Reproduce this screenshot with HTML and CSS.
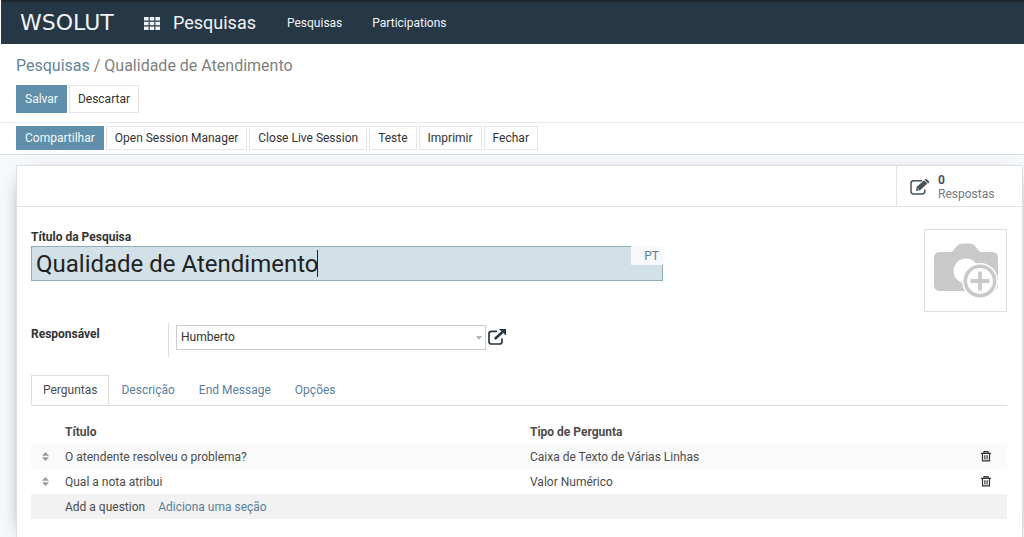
FILE: index.html
```html
<!DOCTYPE html>
<html lang="pt">
<head>
<meta charset="utf-8">
<title>Pesquisas - Qualidade de Atendimento</title>
<link rel="stylesheet" href="styles.css">
</head>
<body>
<header class="navbar">
  <span class="brand">WSOLUT</span>
  <button class="apps" aria-label="Apps"><svg width="16" height="13" viewBox="0 0 16 13" fill="currentColor"><path d="M0 0h4.6v3.6H0zM5.7 0h4.6v3.6H5.7zM11.4 0H16v3.6h-4.6zM0 4.7h4.6v3.6H0zM5.7 4.7h4.6v3.6H5.7zM11.4 4.7H16v3.6h-4.6zM0 9.4h4.6V13H0zM5.7 9.4h4.6V13H5.7zM11.4 9.4H16V13h-4.6z"/></svg></button>
  <a class="app-name" href="#">Pesquisas</a>
  <nav class="menu"><a href="#">Pesquisas</a><a href="#">Participations</a></nav>
</header>
<section class="control">
  <div class="crumbs"><a href="#">Pesquisas</a> / <span>Qualidade de Atendimento</span></div>
  <div class="buttons"><button class="btn primary">Salvar</button><button class="btn">Descartar</button></div>
</section>
<section class="statusbar">
  <button class="btn primary">Compartilhar</button><button class="btn">Open Session Manager</button><button class="btn">Close Live Session</button><button class="btn">Teste</button><button class="btn">Imprimir</button><button class="btn">Fechar</button>
</section>
<main class="content">
  <div class="sheet">
    <div class="button-box">
      <button class="stat">
        <svg width="20" height="16" viewBox="0 0 20 16" fill="none" stroke="currentColor"><path d="M12 1.7H3.6Q1 1.7 1 4.2v8.4Q1 15 3.6 15h8.600q2.600 0 2.600-2.400v-2.200" stroke-width="1.500"/><path d="M6 12l.6-4L14 1.300l3.400 3.200L10 11.300z" fill="currentColor" stroke="none"/><path d="M14.700.7l1-.6q.6-.3 1.100.1l2.300 2.200q.5.600 0 1.100l-.9.9z" fill="currentColor" stroke="none"/><path d="M7.500 9.600l1.200 1.200" stroke="#fff" stroke-width=".7"/></svg>
        <span><strong>0</strong>Respostas</span>
      </button>
    </div>
    <div class="body">
      <div class="head">
        <div class="title">
          <label for="title">Título da Pesquisa</label>
          <div class="title-field">
            <input id="title" type="text" value="Qualidade de Atendimento">
            <span class="caret"></span>
            <button class="lang">PT</button>
          </div>
        </div>
        <button class="photo" aria-label="Imagem"><svg width="64" height="56" viewBox="0 0 64 56"><path d="M6 9h12l5-6q2-2.500 5-2.500h8q3 0 5 2.500l5 6h12q6 0 6 6v27q0 6-6 6H6q-6 0-6-6V15q0-6 6-6z" fill="#c9c9c9"/><circle cx="32" cy="28" r="12.500" fill="#fff"/><circle cx="46" cy="38" r="18" fill="#fff"/><circle cx="46" cy="38" r="14.700" fill="#fff" stroke="#c9c9c9" stroke-width="3.600"/><path d="M46 28.500v19M36.500 38h19" stroke="#c9c9c9" stroke-width="3.800"/></svg></button>
      </div>
      <div class="group">
        <label for="owner">Responsável</label>
        <div class="owner-field">
          <select id="owner"><option>Humberto</option></select>
          <svg class="arrow" width="6" height="4" viewBox="0 0 6 4"><path d="M0 0h6L3 4z" fill="#b5b5b5"/></svg>
          <button class="open" aria-label="Abrir"><svg width="18" height="16" viewBox="0 0 18 16" fill="none" stroke="currentColor"><path d="M9 2.300H3.500Q1 2.300 1 4.700v7.800Q1 15 3.500 15h8q2.500 0 2.500-2.500V9.500" stroke-width="1.700"/><path d="M6.800 10L14.500 3" stroke-width="2.400"/><path d="M11 0h7v6.500z" fill="currentColor" stroke="none"/></svg></button>
        </div>
      </div>
      <div class="tabs" role="tablist"><button class="tab active" role="tab">Perguntas</button><button class="tab" role="tab">Descrição</button><button class="tab" role="tab">End Message</button><button class="tab" role="tab">Opções</button></div>
      <table class="list">
        <thead><tr><th class="grip"></th><th>Título</th><th class="type">Tipo de Pergunta</th><th class="remove"></th></tr></thead>
        <tbody>
          <tr><td class="grip"><svg width="7" height="9" viewBox="0 0 7 9"><path d="M0 3.700h7L3.500 0zM0 5.300h7L3.500 9z"/></svg></td><td>O atendente resolveu o problema?</td><td>Caixa de Texto de Várias Linhas</td><td class="remove"><button aria-label="Excluir"><svg width="10" height="11" viewBox="0 0 10 11" fill="none" stroke="currentColor"><path d="M0 2.400h10M3 2V.7h4V2" stroke-width="1.200"/><path d="M1.500 2.500v7.300h7V2.500" stroke-width="1.200"/><path d="M3.600 4.200v4.300M5 4.200v4.300M6.400 4.200v4.300" stroke-width=".8"/></svg></button></td></tr>
          <tr><td class="grip"><svg width="7" height="9" viewBox="0 0 7 9"><path d="M0 3.700h7L3.500 0zM0 5.300h7L3.500 9z"/></svg></td><td>Qual a nota atribui</td><td>Valor Numérico</td><td class="remove"><button aria-label="Excluir"><svg width="10" height="11" viewBox="0 0 10 11" fill="none" stroke="currentColor"><path d="M0 2.400h10M3 2V.7h4V2" stroke-width="1.200"/><path d="M1.500 2.500v7.300h7V2.500" stroke-width="1.200"/><path d="M3.600 4.200v4.300M5 4.200v4.300M6.400 4.200v4.300" stroke-width=".8"/></svg></button></td></tr>
          <tr class="add"><td></td><td colspan="3"><a class="dark" href="#">Add a question</a><a href="#">Adiciona uma seção</a></td></tr>
        </tbody>
      </table>
    </div>
  </div>
</main>
</body>
</html>
```
FILE: styles.css
```css
* { box-sizing: border-box; }
body { margin: 0; min-height: 100vh; display: flex; flex-direction: column; background: #fff; color: #4c4c4c; font: 12px/18px Roboto, sans-serif; }
a { color: #5b7f9b; text-decoration: none; }
button, input, select { font: inherit; color: inherit; margin: 0; border-radius: 0; }
button { padding: 0; border: 0; background: none; }
svg { display: block; }

.navbar { height: 44px; margin-left: 1px; padding: 0 19px; display: flex; align-items: center; background: #263746; border-top: 2px solid #1c252d; color: #f1f4f6; }
.navbar a { color: inherit; }
.brand { width: 124px; font: 22px/24px "DejaVu Sans", sans-serif; }
.apps { color: #f1f4f6; }
.app-name { margin: 0 31px 0 13px; font-size: 18px; line-height: 24px; }
.menu { display: flex; gap: 30px; }

.control { padding: 12px 16px 9px; border-bottom: 1px solid #e8eaed; }
.crumbs { font-size: 16px; line-height: 20px; color: #7f7f7f; margin-bottom: 9px; }
.crumbs a { color: #5f8699; }
.buttons { display: flex; gap: 2px; }
.btn { height: 28px; padding: 0 8px; border: 1px solid #e3e5e8; background: #fff; color: #333; white-space: nowrap; }
.btn.primary { background: #5f8fab; border-color: #5f8fab; color: #f4f8fa; }
.statusbar { display: flex; gap: 2px; padding: 3px 16px 4px; border-bottom: 1px solid #d9dee4; }
.statusbar .btn { height: 24px; }

.content { flex: 1; display: flex; background: #f7f8fa; padding: 10px 1px 0 16px; overflow: hidden; }
.sheet { flex: 1; background: #fff; border: 1px solid #dcdfe3; border-bottom: 0; box-shadow: 0 5px 20px -12px #000; }
.button-box { display: flex; justify-content: flex-end; border-bottom: 1px solid #e0e2e5; }
.stat { width: 126px; height: 40px; padding: 2px 0 0 13px; display: flex; align-items: center; gap: 8px; border-left: 1px solid #e0e2e5; text-align: left; line-height: 14px; color: #737b84; }
.stat svg, .stat strong { color: #46525d; }
.stat strong { display: block; }

.body { padding: 22px 15px 18px 14px; }
.head { display: flex; justify-content: space-between; align-items: flex-start; }
.title { width: 65%; max-width: 632px; color: #333; }
.title label { display: block; font-weight: bold; line-height: 17px; }
.title-field { position: relative; }
.title input { display: block; width: 100%; height: 35px; padding: 0 4px; border: 1px solid #8eafb9; background: #d2e0e7; color: #222; font-size: 24px; outline: 0; }
.caret { position: absolute; left: 286px; top: 4px; width: 1px; height: 27px; background: #222; }
.lang { position: absolute; top: 0; right: 0; width: 32px; height: 19px; padding-right: 4px; background: #f6f8fa; text-align: right; color: #5b7f9b; }
.photo { width: 83px; height: 83px; display: grid; place-items: center; border: 1px solid #dedede; }

.group { margin-top: 11px; display: flex; }
.group label { width: 138px; height: 34px; padding-top: 2px; border-right: 1px solid #ddd; font-weight: bold; color: #333; }
.owner-field { flex: 1; position: relative; display: flex; align-items: center; gap: 2px; height: 24px; margin: 2px 0 0 7px; }
.owner-field select { appearance: none; width: 310px; height: 25px; padding: 0 4px; border: 1px solid #ccc; background: #fff; color: #333; }
.arrow { position: absolute; left: 300px; top: 11px; pointer-events: none; }
.open { color: #263746; }

.tabs { display: flex; margin-top: 18px; border-bottom: 1px solid #dedede; }
.tab { height: 30px; padding: 0 12px; color: #5b7f9b; }
.tab.active { padding: 0 11px; margin-bottom: -1px; border: 1px solid #dedede; border-bottom-color: #fff; background: #fff; color: #4c4c4c; }

.list { width: 100%; margin-top: 13px; border-collapse: collapse; table-layout: fixed; }
.list th, .list td { height: 25px; padding: 0; text-align: left; }
.list .grip { width: 34px; padding-left: 11px; }
.grip svg { fill: #999; }
.list .type { width: 451px; }
.list .remove { width: 26px; }
.remove button { display: block; color: #333; }
.list tbody tr:first-child { background: #fafafa; }
.list .add { background: #f2f2f2; }
.add a { margin-right: 13px; }
.add .dark { color: #4c4c4c; }
```
